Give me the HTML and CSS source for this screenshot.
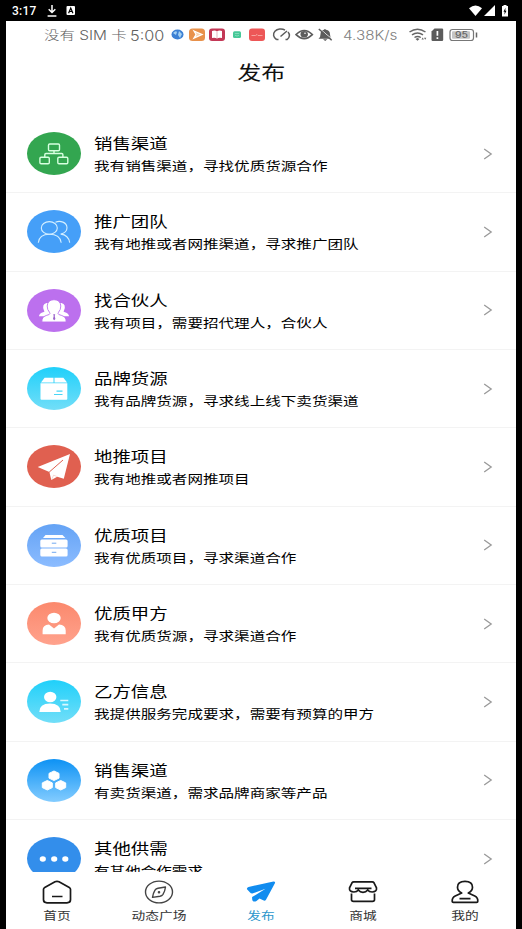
FILE: index.html
```
<!DOCTYPE html>
<html lang="zh-CN">
<head>
<meta charset="utf-8">
<title>发布</title>
<link rel="stylesheet" href="styles.css">
</head>
<body>
<div class="system-bar">
  <span class="clock">3:17</span>
  <svg class="sys-left" width="30" height="14" viewBox="0 0 30 14">
    <path d="M5 1v7M1.700 5.200 5 8.500l3.300-3.300M.6 12h8.800" fill="none" stroke="#fff" stroke-width="1.500"/>
    <rect x="19.500" y="2" width="8.500" height="9" rx="1" fill="#fff"/>
    <path d="M21.600 9.200 23.750 4l2.150 5.200M22.300 7.500h2.900" fill="none" stroke="#000" stroke-width="1.200"/>
  </svg>
  <svg class="sys-right" width="42" height="14" viewBox="0 0 42 14">
    <path d="M0 4.300Q6.500-1.300 13 4.300L6.500 12z" fill="#fff"/>
    <path d="M26 1v11H15z" fill="#fff"/>
    <path d="M33 2h1.500V1h3v1H39v10.500h-6z" fill="#fff"/>
    <path d="m36.500 3.800-2 4h1.200l-.3 3 2.100-4.100h-1.200z" fill="#000"/>
  </svg>
</div>
<div class="screen">
  <div class="phone-bar">
    <span class="carrier"><span class="wide">没有 SIM 卡</span></span>
    <span class="time"><span class="wide">5:00</span></span>
    <svg class="notices" width="164" height="16" viewBox="170 27 164 16">
      <ellipse cx="177.500" cy="34.500" rx="6" ry="5" fill="#3c80d4"/>
      <path d="M173 33q3-3 4-1l-1 3zM179 31l3 3-2 4-2-3z" fill="#a4d0f2"/>
      <rect x="189" y="28.500" width="16" height="12.500" rx="3.500" fill="#e8914b"/>
      <path d="m194 31 8 3.500-8 3.500 2-3.500z" fill="#f8d3b0" stroke="#fff" stroke-width="1.300"/>
      <rect x="209" y="28.500" width="16" height="12.500" rx="3" fill="#c33856"/>
      <path d="M212 31q3-1 5 .5 2-1.500 5-.5v7q-3-.8-5 .5-2-1.300-5-.5z" fill="#fff"/>
      <path d="M217 32v6" stroke="#d98898" stroke-width=".6"/>
      <rect x="233" y="31.300" width="8" height="6.700" rx="1.500" fill="#46c898"/>
      <path d="M234.800 33.500h4.400M235 35.300q2 1.500 4 0" stroke="#8fe0c0" fill="none" stroke-width=".8"/>
      <rect x="249" y="28.500" width="16" height="12.500" rx="3" fill="#ed5757"/>
      <path d="M251.500 35.500h4l1.500-1 1 1h4.500" stroke="#f8aaa6" fill="none" stroke-width=".9"/>
      <g fill="none" stroke="#5c5c5c" stroke-width="1.500">
        <path d="M276.500 39.500a6.800 5.500 0 0 1 8.500-9.400M288 32a6.500 5.500 0 0 1-.8 7.500M280.500 36.500l6.500-5.500M276.500 39.500h2M285.500 39.500h2"/>
        <path d="M296 34.600q8.200-8.300 16.400 0-8.200 8-16.400 0z"/>
      </g>
      <ellipse cx="304.200" cy="34.300" rx="3.700" ry="3.300" fill="#5c5c5c"/>
      <circle cx="305" cy="33.200" r=".8" fill="#fff"/>
      <path d="M318.500 38.800q2-1.300 2-4.600 0-3.700 3.500-4.400.8-1.500 2 0 4 .7 4 4.400 0 3.300 1.800 4.600zM323 39.300h4.400l-2.200 1.700z" fill="#5c5c5c"/>
      <path d="m320 29 12.500 10.500" stroke="#fff" stroke-width="1"/>
      <path d="m318.800 29 12.900 11.200" stroke="#5c5c5c" stroke-width="1.500"/>
    </svg>
    <span class="speed"><span class="wide">4.38K/s</span></span>
    <svg class="radio" width="72" height="16" viewBox="407 27 72 16">
      <g fill="none" stroke="#666" stroke-width="1.500">
        <path d="M409.500 32q8-5.500 16 0M412 34.800q5.500-3.800 11 0M414.500 37.500q3-2.200 6.300 0"/>
      </g>
      <path d="m415.500 39 2-1 2 1-2 1.800zM421.500 39.500l1.200-2 1.200 2zM424 37.800h2.400l-1.200 2z" fill="#666"/>
      <path d="M431.500 31.500l3-3h7.500q1.200 0 1.200 1.200v10q0 1.300-1.200 1.300h-9.300q-1.200 0-1.200-1.300z" fill="#5c5c5c"/>
      <path d="M437.400 31v4.800M437.400 37.200v1.800" stroke="#fff" stroke-width="1.700"/>
      <rect x="450" y="29.500" width="23.500" height="11" rx="2.500" fill="#fff" stroke="#777" stroke-width="1.200"/>
      <rect x="452" y="31.300" width="18" height="7.400" rx="1" fill="#c5c5c5"/>
      <path d="M476.500 32.500v5" stroke="#666" stroke-width="1.500"/>
      <text x="455" y="38.200" class="battery" textLength="13" lengthAdjust="spacingAndGlyphs">95</text>
    </svg>
  </div>
  <h1><span class="wide">发布</span></h1>
  <main class="list">
    <div class="row">
      <svg class="badge" viewBox="0 0 54 43"><ellipse cx="27" cy="21.500" rx="27" ry="21.500" fill="#33a650"/>
        <g fill="none" stroke="#d8ffe0" stroke-width="1.400"><rect x="21.500" y="12" width="11" height="6.700" rx="1.200"/><rect x="12.900" y="25.200" width="9.400" height="6.500" rx="1.200"/><rect x="30.800" y="25.200" width="10" height="6.500" rx="1.200"/><path d="M27 18.700v2.800M17.800 25.200v-2.500q0-1.200 1.200-1.200h15.700q1.200 0 1.200 1.200v2.500"/></g></svg>
      <div class="copy"><h2 class="wide">销售渠道</h2><p class="wide">我有销售渠道，寻找优质货源合作</p></div>
      <svg class="chevron" viewBox="0 0 10 12"><path d="m1.200 1 7 5-7 5"/></svg>
    </div>
    <div class="row">
      <svg class="badge" viewBox="0 0 54 43"><ellipse cx="27" cy="21.500" rx="27" ry="21.500" fill="#459ff8"/>
        <g fill="none" stroke="#d4efff" stroke-width="1.100"><ellipse cx="22.300" cy="17.900" rx="8" ry="6.300"/><path d="M11.300 32.700C12 27 16 24.300 22.300 24.300S33.500 27 34.200 32.700M28.500 12.300C33 10 40 12.300 40 17.800c0 3-2.500 5.400-6.300 6.300 5.300.5 8.300 4 9 8.600"/></g></svg>
      <div class="copy"><h2 class="wide">推广团队</h2><p class="wide">我有地推或者网推渠道，寻求推广团队</p></div>
      <svg class="chevron" viewBox="0 0 10 12"><path d="m1.200 1 7 5-7 5"/></svg>
    </div>
    <div class="row">
      <svg class="badge" viewBox="0 0 54 43"><ellipse cx="27" cy="21.500" rx="27" ry="21.500" fill="#bc70ee"/>
        <path d="M12 27.300q0-3 4.700-4.300 1.400-.5.300-1.500-2.500-6.300 2.500-7.500h15q5 1.200 2.500 7.500-1.100 1 .3 1.500 4.700 1.300 4.700 4.300z" fill="#fff"/>
        <path d="M14.900 33q-.4-5 4.300-6.500l3-1q1.300-.6.300-2.200-2.300-2.500-2.300-6.300.5-6.300 6.800-6.300t6.800 6.300q0 3.800-2.300 6.300-1 1.600.3 2.200l3 1q4.700 1.500 4.300 6.500z" fill="#fff" stroke="#bc70ee" stroke-width=".9"/>
        <path d="M26.200 25.300h2l-.5 1.700.7 3-1.200 1.300L26 30l.7-3z" fill="#9a62cc"/></svg>
      <div class="copy"><h2 class="wide">找合伙人</h2><p class="wide">我有项目，需要招代理人，合伙人</p></div>
      <svg class="chevron" viewBox="0 0 10 12"><path d="m1.200 1 7 5-7 5"/></svg>
    </div>
    <div class="row">
      <svg class="badge" viewBox="0 0 54 43"><defs><linearGradient id="cyan" x2="0" y2="1"><stop stop-color="#20d0fa"/><stop offset="1" stop-color="#72def8"/></linearGradient></defs><ellipse cx="27" cy="21.500" rx="27" ry="21.500" fill="url(#cyan)"/>
        <path d="M17.600 10.800h8.900v4.600H14zM27.500 10.800h8.900l3.700 4.600H27.500zM13.500 16.300h26.800v15.400q0 1-1 1H14.500q-1 0-1-1z" fill="#fff"/><path d="M29.500 24.200h6M27 27.500h8.500" stroke="#48d6f6" stroke-width="1.200"/></svg>
      <div class="copy"><h2 class="wide">品牌货源</h2><p class="wide">我有品牌货源，寻求线上线下卖货渠道</p></div>
      <svg class="chevron" viewBox="0 0 10 12"><path d="m1.200 1 7 5-7 5"/></svg>
    </div>
    <div class="row">
      <svg class="badge" viewBox="0 0 54 43"><ellipse cx="27" cy="21.500" rx="27" ry="21.500" fill="#e06050"/>
        <path d="M10.700 21.900 43 8.900 36.800 33.800l-6.600-2-5.900 3.300-1.900-8.200z" fill="#fff"/><path d="M22.200 27.100 36 15" stroke="#e06050" stroke-width="1"/><path d="m24.600 34.600 2-4.500 3.300 1.400" fill="none" stroke="#f1b2a8" stroke-width=".5"/></svg>
      <div class="copy"><h2 class="wide">地推项目</h2><p class="wide">我有地推或者网推项目</p></div>
      <svg class="chevron" viewBox="0 0 10 12"><path d="m1.200 1 7 5-7 5"/></svg>
    </div>
    <div class="row">
      <svg class="badge" viewBox="0 0 54 43"><defs><linearGradient id="soft" x2="0" y2="1"><stop stop-color="#64a3f5"/><stop offset="1" stop-color="#8cbcff"/></linearGradient></defs><ellipse cx="27" cy="21.500" rx="27" ry="21.500" fill="url(#soft)"/>
        <path d="M18.500 10.900h17l2.900 3.200H16z" fill="#fff"/><rect x="13.300" y="15.500" width="27.300" height="8" rx="1.600" fill="#fff"/><rect x="13.300" y="24.500" width="27.300" height="8" rx="1.600" fill="#fff"/><path d="M24.800 19.200h4.500M24.800 28.300h4.500" stroke="#70a8f0" stroke-width="1"/></svg>
      <div class="copy"><h2 class="wide">优质项目</h2><p class="wide">我有优质项目，寻求渠道合作</p></div>
      <svg class="chevron" viewBox="0 0 10 12"><path d="m1.200 1 7 5-7 5"/></svg>
    </div>
    <div class="row">
      <svg class="badge" viewBox="0 0 54 43"><defs><linearGradient id="coral" x2="0" y2="1"><stop stop-color="#fb896d"/><stop offset="1" stop-color="#ffa28d"/></linearGradient></defs><ellipse cx="27" cy="21.500" rx="27" ry="21.500" fill="url(#coral)"/>
        <ellipse cx="27" cy="16" rx="6.700" ry="5.300" fill="#fff"/><path d="M15.600 32.300v-3.800q0-5.500 6.400-6l5 4 5-4q6.700.5 6.700 6v3.800z" fill="#fff"/></svg>
      <div class="copy"><h2 class="wide">优质甲方</h2><p class="wide">我有优质货源，寻求渠道合作</p></div>
      <svg class="chevron" viewBox="0 0 10 12"><path d="m1.200 1 7 5-7 5"/></svg>
    </div>
    <div class="row">
      <svg class="badge" viewBox="0 0 54 43"><ellipse cx="27" cy="21.500" rx="27" ry="21.500" fill="url(#cyan)"/>
        <ellipse cx="23.200" cy="17" rx="6.200" ry="5.200" fill="#fff"/><path d="M12.300 32q0-8.500 10.700-8.500T33.700 32z" fill="#fff"/><path d="M33.300 20.500h8M35.300 24.700h6M37 28.900h4.300" stroke="#d8f8ff" stroke-width="1.700"/></svg>
      <div class="copy"><h2 class="wide">乙方信息</h2><p class="wide">我提供服务完成要求，需要有预算的甲方</p></div>
      <svg class="chevron" viewBox="0 0 10 12"><path d="m1.200 1 7 5-7 5"/></svg>
    </div>
    <div class="row">
      <svg class="badge" viewBox="0 0 54 43"><defs><linearGradient id="azure" x2="0" y2="1"><stop stop-color="#0d92f4"/><stop offset="1" stop-color="#83ccff"/></linearGradient></defs><ellipse cx="27" cy="21.500" rx="27" ry="21.500" fill="url(#azure)"/>
        <g fill="#fff" stroke="#fff" stroke-linejoin="round"><path d="m27 12 5 2.400v4.700l-5 2.400-5-2.400v-4.700zM20.300 21.500l5 2.400v4.700l-5 2.400-5-2.400v-4.700zM33.700 21.500l5 2.400v4.700l-5 2.400-5-2.400v-4.700z"/></g></svg>
      <div class="copy"><h2 class="wide">销售渠道</h2><p class="wide">有卖货渠道，需求品牌商家等产品</p></div>
      <svg class="chevron" viewBox="0 0 10 12"><path d="m1.200 1 7 5-7 5"/></svg>
    </div>
    <div class="row">
      <svg class="badge" viewBox="0 0 54 43"><ellipse cx="27" cy="21.500" rx="27" ry="21.500" fill="#338eeb"/>
        <g fill="#fff"><ellipse cx="15.800" cy="22" rx="3.100" ry="2.800"/><ellipse cx="27.200" cy="22" rx="3.100" ry="2.800"/><ellipse cx="38.300" cy="22" rx="3.100" ry="2.800"/></g></svg>
      <div class="copy"><h2 class="wide">其他供需</h2><p class="wide">有其他合作需求</p></div>
      <svg class="chevron" viewBox="0 0 10 12"><path d="m1.200 1 7 5-7 5"/></svg>
    </div>
  </main>
  <nav class="tabs">
    <div class="tab"><svg viewBox="0 0 30 24"><path d="M1.500 9.300q0-1.200 1.200-1.900L13 1.800q2-1 4 0l10.300 5.600q1.200.7 1.200 1.900v10.500q0 3-3.500 3H5q-3.500 0-3.500-3zM10 16.500h10.500"/></svg><span class="wide">首页</span></div>
    <div class="tab dial"><svg viewBox="0 0 30 24"><ellipse cx="15" cy="12" rx="13.500" ry="10.900"/><path d="M21.500 7q-.5 4-2.500 7.300-1 1.500-3 1.900l-7.500 1.200q.5-4 2.500-7.300 1-1.500 3-1.900z"/><ellipse cx="15" cy="12.200" rx=".6" ry=".5"/></svg><span class="wide">动态广场</span></div>
    <div class="tab active"><svg viewBox="0 0 30 24"><path d="M2.500 7 27.500 1.500q2.200 0 1.400 1.700L20 19.700q-1 1.600-2.800.6l-3.700-1.900-3 2.700q-2.500 1.200-3.900-.4-.6-1.200-.5-3.600L19.500 8.700 6.300 13.500q-1.600 0-2.500-1.300L1 9.300Q.5 7.600 2.500 7z"/></svg><span class="wide">发布</span></div>
    <div class="tab"><svg viewBox="0 0 30 24"><path d="M5.800 1.800h18.400q1.200 0 1.800 1l2.500 5.100q.5 4.100-4.400 4.100-3 0-4.400-2-1.800 2.300-4.700 2.300T10.300 10q-1.400 2-4.400 2-4.900 0-4.400-4.100L4 2.800q.6-1 1.800-1zM7 8.300h16.500M3.500 13.500v6.300q0 1.500 2 1.500h19q2 0 2-1.500v-6.300"/></svg><span class="wide">商城</span></div>
    <div class="tab"><svg viewBox="0 0 30 24"><path d="M11.700 13Q7.500 10.800 7.500 7.200q0-5.800 7.500-5.800t7.500 5.800q0 3.600-4.200 5.800l6.500 3q3.200 1.500 3 5.300 0 1-1.200 1H3.400q-1.200 0-1.200-1Q2 17.500 5.200 16zM9.500 18.700h11"/></svg><span class="wide">我的</span></div>
  </nav>
</div>
</body>
</html>
```

FILE: styles.css
```
* { box-sizing: border-box; margin: 0; padding: 0; }
body {
  display: flex;
  flex-direction: column;
  height: 929px;
  overflow: hidden;
  background: #000;
  color: #111;
  font-family: Roboto, "Noto Sans CJK SC", sans-serif;
}
svg { display: block; flex: none; }
.wide {
  display: block;
  width: max-content;
  white-space: nowrap;
  transform: scaleX(1.245);
  transform-origin: 0 50%;
}
.system-bar {
  display: flex;
  align-items: center;
  height: 21px;
  flex: none;
  padding: 0 11px 0 12px;
  color: #fff;
}
.clock { width: 35px; font-size: 12px; font-weight: 500; letter-spacing: .2px; }
.sys-left { margin-top: 1px; }
.sys-right { margin-left: auto; }
.screen {
  display: flex;
  flex-direction: column;
  flex: 1;
  min-height: 0;
  width: 510px;
  margin-left: 6px;
  background: #fff;
}
.phone-bar {
  display: flex;
  align-items: center;
  height: 28px;
  flex: none;
  padding-left: 38px;
  color: #606060;
  font-family: Inter, "Noto Sans CJK SC", sans-serif;
  font-weight: 300;
}
.carrier { width: 86px; font-size: 12.4px; }
.time { width: 40px; font-size: 14px; }
.time .wide { transform: scaleX(1.16); }
.notices { margin-right: 9px; }
.speed { width: 64px; font-size: 13px; color: #808080; }
.speed .wide { transform: scaleX(1.17); }
.battery { font: 500 8.5px Inter, sans-serif; fill: #666; }
h1 {
  display: flex;
  justify-content: center;
  align-items: center;
  height: 46px;
  flex: none;
  font-size: 19.3px;
  font-weight: 400;
}
h1 .wide, .tab .wide { transform-origin: 50% 50%; }
.list { flex: 1; min-height: 0; padding-top: 20px; overflow: hidden; }
.row {
  display: flex;
  align-items: center;
  height: 78.330px;
  padding: 0 23px 0 21px;
  border-bottom: 1px solid #f3f3f3;
}
.badge { width: 54px; height: 43px; }
.copy { flex: 1; margin-left: 13px; padding-top: 4px; }
.copy h2 { font-size: 14.8px; font-weight: 400; line-height: 23px; color: #000; }
.copy p { font-size: 12.5px; line-height: 22px; color: #000; }
.chevron { width: 10px; height: 12px; fill: none; stroke: #999; stroke-width: 1.3; }
.tabs { display: flex; height: 57px; flex: none; background: #fff; }
.tab { display: flex; flex: 1; flex-direction: column; align-items: center; padding-top: 8px; }
.tab svg { width: 30px; height: 24px; fill: none; stroke: #191919; stroke-width: 1.7; stroke-linejoin: round; }
.tab span { margin-top: 5px; font-size: 11px; line-height: 16px; color: #333; }
.tab.dial svg { stroke: #444; stroke-width: 1.4; }
.tab.active svg { fill: #118cef; stroke: none; }
.tab.active span { color: #2a96cc; }
```
